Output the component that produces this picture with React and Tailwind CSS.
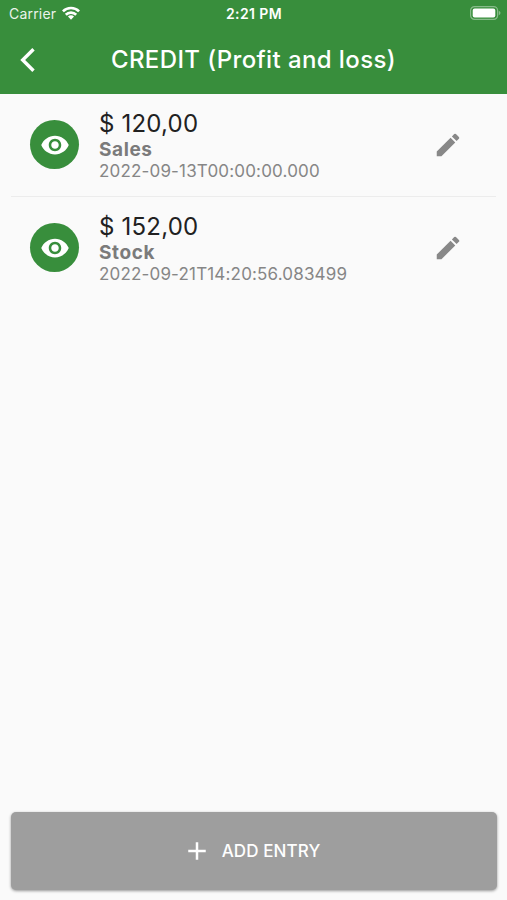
const entries = [
  { amount: "$ 120,00", name: "Sales", date: "2022-09-13T00:00:00.000" },
  { amount: "$ 152,00", name: "Stock", date: "2022-09-21T14:20:56.083499" },
];

function StatusBar() {
  return (
    <div className="grid h-[27px] grid-cols-3 items-center pl-[9px] pr-[6px] text-[14px] leading-[27px]">
      <div className="flex items-center gap-[6px]">
        <span className="tracking-[0.2px] opacity-90">Carrier</span>
        <svg className="-mt-[2px] h-[14px] w-[18px]" viewBox="0 0 19 14" fill="none" stroke="currentColor" strokeWidth="2.8">
          <path d="M1 5.3a12 12 0 0 1 17 0" />
          <path d="M4 8.9a7.8 7.8 0 0 1 11 0" />
          <path d="M9.5 14 6.3 10.8a4.5 4.5 0 0 1 6.4 0z" fill="currentColor" stroke="none" />
        </svg>
      </div>
      <span className="whitespace-nowrap pr-[2px] text-center text-[14px] font-semibold tracking-[0.4px]">2:21 PM</span>
      <svg className="-mt-px h-[14px] w-[31px] justify-self-end" viewBox="0 0 31 14">
        <rect x="0.6" y="0.6" width="27" height="12.8" rx="4" fill="none" stroke="#fff" strokeOpacity="0.4" strokeWidth="1.2" />
        <rect x="2.7" y="2.5" width="22.6" height="9" rx="2" fill="#fff" />
        <path d="M28.8 4.8c2.2.8 2.2 3.6 0 4.4z" fill="#fff" fillOpacity="0.4" />
      </svg>
    </div>
  );
}

function Entry({ amount, name, date }) {
  return (
    <li className="flex h-[102.5px] items-center pl-[19px] pr-[33px]">
      <button className="flex size-[49px] items-center justify-center rounded-full bg-[#388e3c] text-white">
        <svg className="size-[30px]" viewBox="0 0 24 24" fill="currentColor">
          <path d="M12 4.5C7 4.5 2.73 7.61 1 12c1.73 4.39 6 7.5 11 7.5s9.27-3.11 11-7.5c-1.73-4.39-6-7.5-11-7.5zM12 17c-2.76 0-5-2.24-5-5s2.24-5 5-5 5 2.24 5 5-2.24 5-5 5zm0-8c-1.66 0-3 1.34-3 3s1.34 3 3 3 3-1.34 3-3-1.34-3-3-3z" />
        </svg>
      </button>
      <div className="ml-5 flex-1 whitespace-nowrap pt-[2px]">
        <p className="text-[24px] leading-[29px] tracking-[0.2px] text-[#212121]">{amount}</p>
        <p className="text-[19px] leading-[23px] font-bold tracking-[0.6px] text-[#7b7b7b]">{name}</p>
        <p className="text-[17px] leading-[21px] tracking-[0.17px] text-[#868686]">{date}</p>
      </div>
      <button className="text-[#888]">
        <svg className="size-[30px]" viewBox="0 0 24 24" fill="currentColor">
          <path d="M3 17.25V21h3.75L17.81 9.94l-3.75-3.75L3 17.25zM20.71 7.04a.996.996 0 0 0 0-1.41l-2.34-2.34a.996.996 0 0 0-1.41 0l-1.83 1.83 3.75 3.75 1.83-1.83z" />
        </svg>
      </button>
    </li>
  );
}

export default function App() {
  return (
    <div className="flex h-[900px] w-full flex-col bg-[#fafafa] font-['Inter',sans-serif]">
      <header className="h-[94px] bg-[#388e3c] text-white">
        <StatusBar />
        <div className="grid h-[66px] grid-cols-[80px_1fr_80px] items-center">
          <button className="pl-[20px]">
            <svg className="h-[24px] w-[15px]" viewBox="0 0 15 24" fill="none" stroke="currentColor" strokeWidth="3.4">
              <path d="M13.5 1.3 2.7 12l10.8 10.7" />
            </svg>
          </button>
          <h1 className="whitespace-nowrap text-center text-[24px] font-medium tracking-[0.4px]">CREDIT (Profit and loss)</h1>
        </div>
      </header>
      <ul className="mx-[11px] flex-1 divide-y divide-[#ececec]">
        {entries.map((entry) => (
          <Entry key={entry.date} {...entry} />
        ))}
      </ul>
      <button className="ml-[11px] mr-[10px] mb-[10px] flex h-[78px] items-center justify-center gap-[10px] rounded-[5px] bg-[#9e9e9e] pr-[6px] text-white shadow-[0_1px_3px_rgba(0,0,0,0.4)]">
        <svg className="size-[30px]" viewBox="0 0 24 24" fill="currentColor">
          <path d="M19 13h-6v6h-2v-6H5v-2h6V5h2v6h6v2z" />
        </svg>
        <span className="pt-[2px] text-[17px] font-medium tracking-[0.1px]">ADD ENTRY</span>
      </button>
    </div>
  );
}
